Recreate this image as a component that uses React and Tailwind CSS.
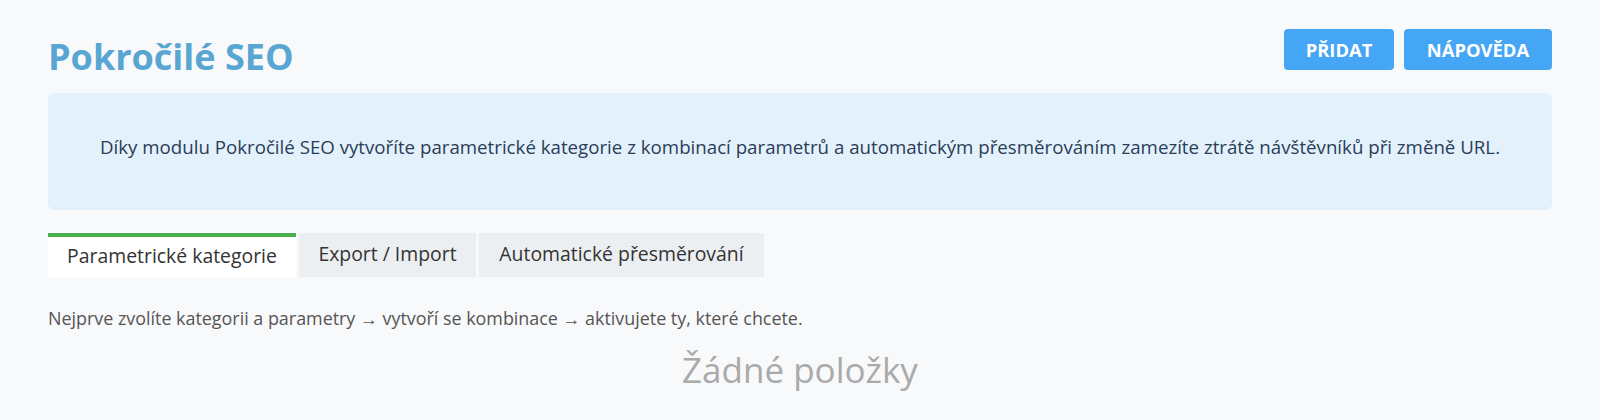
export default function App() {
  const font = { fontFamily: '"Open Sans", "Noto Sans", sans-serif' };
  return (
    <div className="min-h-[420px] w-full bg-[#f8f9fa]" style={font}>
      <div className="px-12 pt-[29px]">
        <div className="flex items-start justify-between">
          <h1 className="mt-[4px] text-[36px] font-bold leading-[48px] text-[#5aa6d2]">Pokročilé SEO</h1>
          <div className="flex gap-[10px]">
            <button className="h-[41px] w-[110px] rounded-[4px] bg-[#45a6f5] text-[18.4px] font-bold text-white">PŘIDAT</button>
            <button className="h-[41px] w-[148px] rounded-[4px] bg-[#45a6f5] text-[18.4px] font-bold text-white">NÁPOVĚDA</button>
          </div>
        </div>
        <div className="mt-[12px] flex h-[117px] items-center justify-center rounded-[6px] bg-[#e3f1fd] pb-[8px] text-[18.7px] text-[#2b3d57]">
          Díky modulu Pokročilé SEO vytvoříte parametrické kategorie z kombinací parametrů a automatickým přesměrováním zamezíte ztrátě návštěvníků při změně URL.
        </div>
        <div className="mt-[23px] flex gap-[3px]">
          <div className="flex h-[44px] w-[248px] items-center justify-center border-t-4 border-[#4caf50] bg-white pb-[3px] text-[19.4px] text-[#333]">Parametrické kategorie</div>
          <div className="flex h-[44px] w-[177px] items-center justify-center bg-[#eceff1] pb-[3px] text-[19.4px] text-[#333]">Export / Import</div>
          <div className="flex h-[44px] w-[285px] items-center justify-center bg-[#eceff1] pb-[3px] text-[19.4px] text-[#333]">Automatické přesměrování</div>
        </div>
        <p className="mt-[29px] text-[17.9px] leading-[24px] text-[#555]">Nejprve zvolíte kategorii a parametry → vytvoří se kombinace → aktivujete ty, které chcete.</p>
        <p className="mt-[20px] text-center text-[35px] leading-[40px] text-[#aaaaaa]">Žádné položky</p>
      </div>
    </div>
  );
}
